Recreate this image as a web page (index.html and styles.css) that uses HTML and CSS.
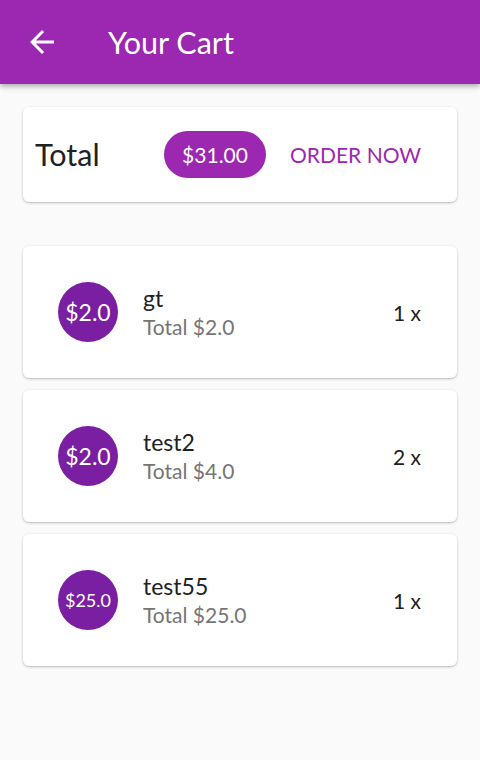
FILE: index.html
```html
<!DOCTYPE html>
<html>
<head>
<meta charset="utf-8">
<link rel="stylesheet" href="styles.css">
</head>
<body>
<header class="appbar">
  <svg class="back" viewBox="0 0 24 24" width="36" height="36"><path fill="#fff" d="M20 11H7.83l5.59-5.59L12 4l-8 8 8 8 1.41-1.41L7.83 13H20v-2z"/></svg>
  <h1 class="title">Your Cart</h1>
</header>
<main class="content">
  <section class="card total-card">
    <span class="total-label">Total</span>
    <span class="spacer"></span>
    <span class="chip">$31.00</span>
    <button class="order">ORDER NOW</button>
  </section>
  <div class="list">
    <section class="card item">
      <div class="avatar"><span class="av-text">$2.0</span></div>
      <div class="info">
        <div class="name">gt</div>
        <div class="sub">Total $2.0</div>
      </div>
      <div class="qty">1 x</div>
    </section>
    <section class="card item">
      <div class="avatar"><span class="av-text">$2.0</span></div>
      <div class="info">
        <div class="name">test2</div>
        <div class="sub">Total $4.0</div>
      </div>
      <div class="qty">2 x</div>
    </section>
    <section class="card item">
      <div class="avatar"><span class="av-text small">$25.0</span></div>
      <div class="info">
        <div class="name">test55</div>
        <div class="sub">Total $25.0</div>
      </div>
      <div class="qty">1 x</div>
    </section>
  </div>
</main>
</body>
</html>
```
FILE: styles.css
```css
* { box-sizing: border-box; }
html, body { margin: 0; padding: 0; }
body {
  background: #fafafa;
  font-family: Lato, "Noto Sans", sans-serif;
  width: 480px;
  height: 760px;
  overflow: hidden;
}
.appbar {
  height: 84px;
  background: #9c27b0;
  display: flex;
  align-items: center;
  padding-left: 24px;
  box-shadow: 0 2px 4px rgba(0,0,0,0.2), 0 4px 6px rgba(0,0,0,0.12);
  position: relative;
  z-index: 1;
}
.back { display: block; }
.title {
  margin: 0 0 0 48px;
  color: #fff;
  font-weight: 400;
  font-size: 30.5px;
  line-height: 1;
}
.content {
  padding: 23px 23px 0;
}
.card {
  background: #fff;
  border-radius: 6px;
  box-shadow: 0 1px 3px rgba(0,0,0,0.2), 0 1px 1px rgba(0,0,0,0.08);
}
.total-card {
  height: 95px;
  display: flex;
  align-items: center;
  padding: 0 12px;
}
.total-label {
  font-size: 30.5px;
  color: #212121;
  line-height: 1;
}
.spacer { flex: 1; }
.chip {
  background: #9c27b0;
  color: #fff;
  font-size: 21px;
  height: 47px;
  width: 102px;
  border-radius: 24px;
  display: flex;
  align-items: center;
  justify-content: center;
}
.order {
  background: none;
  border: none;
  color: #9c27b0;
  font-family: inherit;
  font-size: 21px;
  padding: 0 24px;
  margin-left: 0;
  height: 54px;
  line-height: 1;
}
.list {
  margin-top: 44px;
  display: flex;
  flex-direction: column;
  gap: 12px;
}
.item {
  height: 132px;
  display: flex;
  align-items: center;
  padding: 0 36px 0 35px;
}
.avatar {
  width: 60px;
  height: 60px;
  border-radius: 50%;
  background: #7b1fa2;
  color: #fff;
  display: flex;
  align-items: center;
  justify-content: center;
  flex: none;
}
.av-text { font-size: 23px; line-height: 1; }
.av-text.small { font-size: 18px; }
.info {
  flex: 1;
  margin-left: 25px;
}
.name {
  font-size: 23px;
  color: #212121;
  line-height: 30px;
}
.sub {
  font-size: 21px;
  color: #757575;
  line-height: 28px;
}
.qty {
  font-size: 21px;
  color: #212121;
}
```
